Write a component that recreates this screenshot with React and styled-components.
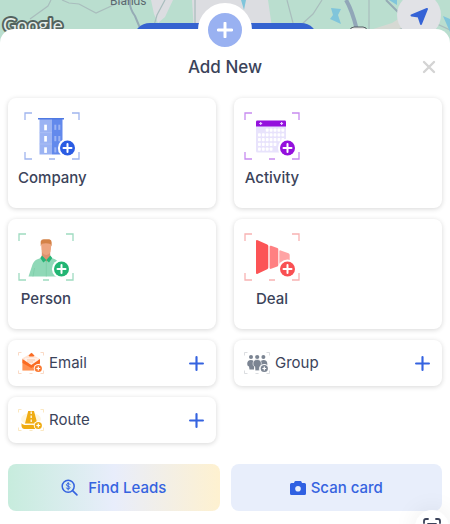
import styled, { createGlobalStyle } from "styled-components";

const GlobalStyle = createGlobalStyle`
  * {
    box-sizing: border-box;
  }

  body {
    margin: 0;
    background: #fff;
    font-family: Inter, "Liberation Sans", sans-serif;
    color: #3b435a;
  }

  button {
    font-family: inherit;
    color: inherit;
    border: none;
    padding: 0;
    cursor: pointer;
  }

  svg {
    display: block;
    flex-shrink: 0;
  }
`;

const Page = styled.div`
  position: relative;
  min-height: 100vh;
  overflow: hidden;
`;

const MapArea = styled.div`
  height: 48px;
  background: #badecf;
`;

const MapCanvas = styled.svg`
  width: 100%;
  height: 48px;
`;

const LocateButton = styled.button`
  position: absolute;
  top: -7px;
  right: 9px;
  width: 44px;
  height: 44px;
  border-radius: 50%;
  background: #e1e2e6;
`;

const Sheet = styled.main`
  position: relative;
  margin-top: -19px;
  padding: 0 8px 12px;
  border-radius: 14px 14px 0 0;
  background: #fff;
`;

const AddBubble = styled.button`
  position: absolute;
  top: -26px;
  left: 50%;
  transform: translateX(-50%);
  width: 54px;
  height: 54px;
  border: 10px solid #fff;
  border-radius: 50%;
  background: #99b1f1;
  display: flex;
  align-items: center;
  justify-content: center;
`;

const SheetHeader = styled.header`
  display: grid;
  grid-template-columns: 1fr auto 1fr;
  align-items: center;
  padding: 26px 6px 19px;
`;

const Title = styled.h1`
  grid-column: 2;
  margin: 0;
  font-size: 17px;
  line-height: 24px;
  font-weight: 500;
`;

const CloseButton = styled.button`
  justify-self: end;
  background: none;
`;

const Grid = styled.div`
  display: grid;
  grid-template-columns: 1fr 1fr;
  gap: 11px 18px;
`;

const CardBase = styled.button`
  display: flex;
  border-radius: 8px;
  background: #fff;
  box-shadow: 0 1px 5px rgba(0, 0, 0, 0.16);
`;

const Card = styled(CardBase)`
  height: 110px;
  padding: 14px 10px;
  align-items: flex-start;
`;

const CardBody = styled.span`
  display: flex;
  flex-direction: column;
  align-items: center;
  gap: 7px;
`;

const CardLabel = styled.span`
  font-size: 15px;
  line-height: 22px;
  font-weight: 500;
`;

const RowCard = styled(CardBase)`
  height: 46px;
  padding: 0 12px 0 10px;
  align-items: center;
  gap: 5px;
`;

const RowLabel = styled.span`
  flex: 1;
  text-align: left;
  font-size: 15px;
  line-height: 22px;
`;

const Actions = styled.div`
  display: grid;
  grid-template-columns: 1fr 1fr;
  gap: 11px;
  margin-top: 21px;
`;

const ActionButton = styled.button`
  height: 47px;
  display: flex;
  align-items: center;
  justify-content: center;
  gap: ${(p) => p.$gap};
  border-radius: 8px;
  background: ${(p) => p.$background};
  color: #3563e0;
  font-size: 15px;
  font-weight: 500;
`;

const ScanBubble = styled.button`
  position: absolute;
  right: 1px;
  bottom: -20px;
  width: 34px;
  height: 34px;
  border-radius: 50%;
  background: #fff;
  box-shadow: 0 0 24px rgba(0, 0, 0, 0.08);
  display: flex;
  align-items: center;
  justify-content: center;
`;

const Plus = ({ size, color, width }) => (
  <svg width={size} height={size} viewBox="0 0 14 14" stroke={color} strokeWidth={width} strokeLinecap="round">
    <path d="M7 1v12M1 7h12" />
  </svg>
);

// corner brackets, the drawing itself and the round plus badge
const FramedIcon = ({ frame, accent, children }) => (
  <svg width="56" height="48" viewBox="0 0 56 48">
    <path d="M1 8V1h7M48 1h7v7M55 40v7h-7M8 47H1v-7M25 47h6" fill="none" stroke={frame} strokeWidth="1.3" />
    {children}
    <circle cx="43.5" cy="36" r="9.6" fill="#fff" />
    <circle cx="43.5" cy="36" r="7.5" fill={accent} />
    <path d="M43.5 32v8M39.5 36h8" stroke="#fff" strokeWidth="2" strokeLinecap="round" />
  </svg>
);

const SmallFramedIcon = ({ frame, accent, children }) => (
  <svg width="26" height="22" viewBox="0 0 26 22">
    <path
      d="M.5 3.5v-3h3M22.5.5h3v3M25.5 18.5v3h-3M3.5 21.5h-3v-3M11.5 21.5h3"
      fill="none"
      stroke={frame}
      strokeWidth="0.8"
    />
    {children}
    <circle cx="20.3" cy="16.5" r="4.5" fill="#fff" />
    <circle cx="20.3" cy="16.5" r="3.6" fill={accent} />
    <path d="M20.3 14.6v3.8M18.4 16.5h3.8" stroke="#fff" strokeWidth="1.2" />
  </svg>
);

const CompanyIcon = () => (
  <FramedIcon frame="#a0b5ee" accent="#2b5ce3">
    <path d="M15.5 7H28v35.5H15.5z" fill="#9bb3f3" />
    <path d="M28 7h10.5v35.5H28z" fill="#6289ec" />
    <path d="M14 6h26v1.5H14z" fill="#4f79e2" />
    <path d="M15.5 20.7H28M15.5 32H28" stroke="#b5c7f6" strokeWidth="0.6" />
    {[12.7, 24, 35.3].map((y) => (
      <g key={y}>
        <rect x="20.2" y={y} width="2.7" height="5.6" fill="#fff" />
        <rect x="30.3" y={y} width="2" height="5.2" fill="#9bb3f3" />
        <rect x="34.3" y={y} width="2" height="5.2" fill="#9bb3f3" />
      </g>
    ))}
  </FramedIcon>
);

const ActivityIcon = () => (
  <FramedIcon frame="#c78cf0" accent="#9411dd">
    <rect x="12" y="10" width="30" height="30.5" rx="1.5" fill="#e8e3fc" />
    <path d="M12 14.5V9.7q0-1.2 1.2-1.2h27.6q1.2 0 1.2 1.2v4.8z" fill="#9411dd" />
    <path d="M16.7 10v3M15.2 11.5h3M37.6 10v3M36.1 11.5h3" stroke="#e9cbff" strokeWidth="1.2" />
    {[0, 1, 2, 3, 4].map((row) =>
      [0, 1, 2, 3, 4, 5, 6]
        .filter((col) => (row > 0 || col > 1) && (row < 4 || col < 4) && (row < 3 || col < 5))
        .map((col) => (
          <rect
            key={`${row}-${col}`}
            x={14 + col * 3.9}
            y={16.5 + row * 4.75}
            width="2.8"
            height="3.2"
            rx="0.8"
            fill="#fff"
          />
        ))
    )}
  </FramedIcon>
);

const PersonIcon = () => (
  <FramedIcon frame="#9edbc0" accent="#22b573">
    <path d="M10.5 43.5l4-12q1.5-4 5-5.2l4.500-1.800h8.500l4.500 1.800q3 1 4 4.600l3 12.600z" fill="#8fd8b7" />
    <path d="M23.800 18h8.400v6l-3.600 5-4.800-5z" fill="#df9270" />
    <path d="M23.100 9.5h10.200l-.4 7.500q-.6 4.600-4.700 5-4.100-.4-4.700-5z" fill="#eda580" />
    <path d="M22.700 13.500v-5q.6-2.300 3-2.300h5.600q2.300.4 2.300 2.800v4.500l-1.100-2.500q-4.500-1.300-8.700-.2z" fill="#d48247" />
    <path d="M24 22.500l4.300 4.500 4-4.500 2 2.500-3.300 4.500-2.700-2.300-3 2.300-3-4.500z" fill="#28b578" />
    <path d="M28.300 28v15.500M16.500 35l-1.500 8.500" stroke="#75c9a2" strokeWidth="0.6" />
  </FramedIcon>
);

const DealIcon = () => (
  <FramedIcon frame="#f8b3b3" accent="#f95053">
    <path d="M12 8.300q0-1.800 1.700-1.100l9.500 4.200q1.100.5 1.100 1.700v21.500q0 1.200-1.100 1.700l-9.500 4.500q-1.700.7-1.700-1.100z" fill="#fc5456" />
    <path d="M25.600 14q0-1.700 1.500-1.200l6.200 2.300q1 .4 1 1.400v15.500q0 1-1 1.500l-6.200 2.300q-1.500.4-1.500-1z" fill="#ff8082" />
    <path d="M35.300 18.500q0-1.500 1.400-1.100l7.800 2.900q1.200.5 1.200 1.700v6l-6 2.500h-4.400z" fill="#ffa4a5" />
  </FramedIcon>
);

const EmailIcon = () => (
  <SmallFramedIcon frame="#f9d0b7" accent="#fa7931">
    <path d="M4 6.500l8-4.500V1.500h3V3l7 4v11.500H4z" fill="#ffe5d5" />
    <path d="M10.500 3.500l3-2.700 3 2.700-1 1h-4z" fill="#fa6b22" />
    <path d="M7 6h13v8H7z" fill="#fff0e8" />
    <path d="M9 8h8M9 10h6" stroke="#fbc5a5" />
    <path d="M4.500 8l8.800 6L22 8v10.500H4.500z" fill="#ff9152" />
    <path d="M4.500 7l8.800 6L22 7v4l-8.700 5-8.800-5z" fill="#fa6b22" />
  </SmallFramedIcon>
);

const RouteIcon = () => (
  <SmallFramedIcon frame="#fae2b3" accent="#efac13">
    <ellipse cx="13" cy="10" rx="10" ry="6" fill="#fff6df" />
    <path d="M10.200 2h5.800l3.300 12.500H7z" fill="#efac13" />
    <path d="M13.200 2.500v11" stroke="#fff" strokeWidth="1.200" strokeDasharray="2.500 1.500" />
    <path d="M3.500 14q1 2 5 2h9v4h-11Q4 20 3.500 17z" fill="#efac13" />
  </SmallFramedIcon>
);

const GroupIcon = () => (
  <SmallFramedIcon frame="#d2d4d8" accent="#7b8492">
    <g fill="#7b8492">
      <circle cx="7" cy="5" r="2" />
      <circle cx="13.200" cy="5" r="2.100" />
      <circle cx="19.400" cy="5" r="2" />
      <path d="M3.200 12q0-4 3.800-4 2.600 0 3 2v7.500H5.500l-.5-3q-1.800-.5-1.800-2.500z" />
      <path d="M16.500 10q.5-2 3-2 3.800 0 3.800 4v4h-6.800z" />
    </g>
    <path
      d="M9 12q0-4.500 4.200-4.500T17.400 12q0 2-1.700 2.700l-.5 4h-4l-.5-4Q9 14 9 12z"
      fill="#7b8492"
      stroke="#fff"
      strokeWidth="0.6"
    />
  </SmallFramedIcon>
);

const CARDS = [
  { label: "Company", Icon: CompanyIcon },
  { label: "Activity", Icon: ActivityIcon },
  { label: "Person", Icon: PersonIcon },
  { label: "Deal", Icon: DealIcon },
];

const ROWS = [
  { label: "Email", Icon: EmailIcon },
  { label: "Group", Icon: GroupIcon },
  { label: "Route", Icon: RouteIcon },
];

const MapBackground = () => (
  <MapCanvas viewBox="0 0 450 48" preserveAspectRatio="xMidYMin slice">
    <path d="M151 0h22l-8 17-7 6-4-9zM192 0h76l7 48h-80z" fill="#dcdde1" />
    <path d="M370 30l22-7 14-9 15 2v32h-55z" fill="#d6d9d3" />
    <g fill="none" stroke="#a9bdbd" strokeWidth="1.2">
      <path d="M51 0l-3 6-18 13M62 0l7 3 10 1 17 9 24-11 9-2M165 0l-8 15-4 14" />
      <path d="M287 0l6 23M322 0l-9 14-11 10 8 8M369 0v30M195 0v30" />
      <path d="M398 30l28-11 24 11" />
    </g>
    <path d="M130 0q-1 8 5 16l5 12M386 0l18 18" fill="none" stroke="#96abb5" strokeWidth="2" />
    <path d="M346 0q6 10 11 30" fill="none" stroke="#91a6b8" strokeWidth="4" />
    <path d="M331 8l10 1-3 6 3 9-11-5 3-4zM241 0h5l-2 10zM389 0l8 5v-5zM443 16l7 3v13z" fill="#80c5db" />
    <rect x="133" y="23" width="185" height="34" rx="17" fill="#3563d0" />
    <rect x="350" y="27" width="17" height="12" rx="4" fill="#e7e7e7" stroke="#555f63" />
    <text x="110" y="5" fontSize="12" fontFamily="Roboto, sans-serif" fill="#5b6870">
      Blands
    </text>
    <text
      x="3"
      y="32"
      fontSize="19"
      fontFamily="Lato, sans-serif"
      fill="#e6edea"
      stroke="#53635e"
      strokeWidth="4"
      strokeLinejoin="round"
      paintOrder="stroke"
    >
      Google
    </text>
  </MapCanvas>
);

const App = () => {
  return (
    <Page>
      <GlobalStyle />
      <MapArea>
        <MapBackground />
      </MapArea>
      <LocateButton aria-label="My location">
        <svg width="44" height="44" viewBox="0 0 44 44">
          <path
            d="M30 16l-6 15-2.500-7.500-7-1z"
            fill="#3563d6"
            stroke="#3563d6"
            strokeWidth="2"
            strokeLinejoin="round"
          />
        </svg>
      </LocateButton>

      <Sheet>
        <AddBubble aria-label="Add">
          <Plus size={16} color="#fff" width={2.6} />
        </AddBubble>
        <SheetHeader>
          <Title>Add New</Title>
          <CloseButton aria-label="Close">
            <svg width="14" height="14" viewBox="0 0 14 14" stroke="#d4d4d4" strokeWidth="2.4" strokeLinecap="round">
              <path d="M2 2l10 10M12 2L2 12" />
            </svg>
          </CloseButton>
        </SheetHeader>

        <Grid>
          {CARDS.map(({ label, Icon }) => (
            <Card key={label}>
              <CardBody>
                <Icon />
                <CardLabel>{label}</CardLabel>
              </CardBody>
            </Card>
          ))}
          {ROWS.map(({ label, Icon }) => (
            <RowCard key={label}>
              <Icon />
              <RowLabel>{label}</RowLabel>
              <Plus size={15} color="#3563e0" width={2} />
            </RowCard>
          ))}
        </Grid>

        <Actions>
          <ActionButton $gap="10px" $background="linear-gradient(90deg, #c7ecdd 0%, #e8edfb 50%, #fef1d0 100%)">
            <svg width="17" height="17" viewBox="0 0 17 17" fill="none" stroke="#3563e0" strokeLinecap="round">
              <circle cx="7.2" cy="7.2" r="6" strokeWidth="1.5" />
              <path d="M11.6 11.6l4.300 4.300" strokeWidth="1.6" />
              <path
                d="M9 5.400Q8.600 4.500 7.200 4.500T5.400 5.700Q5.400 6.900 7.200 7.200T9 8.700Q9 9.900 7.200 9.900T5.400 9M7.200 3.500v7.400"
                strokeWidth="1"
              />
            </svg>
            Find Leads
          </ActionButton>
          <ActionButton $gap="5px" $background="#e8eefb">
            <svg width="16" height="14" viewBox="0 0 16 14">
              <path
                d="M5.500 0h5q.6 0 .9.600L12 2h2.500Q16 2 16 3.500v9q0 1.500-1.500 1.500h-13Q0 14 0 12.500v-9Q0 2 1.500 2H4L4.600.6Q4.900 0 5.500 0z"
                fill="#2f60e2"
              />
              <circle cx="8" cy="7.700" r="2.800" fill="#e8eefb" />
            </svg>
            Scan card
          </ActionButton>
        </Actions>
      </Sheet>

      <ScanBubble aria-label="Scan">
        <svg width="18" height="18" viewBox="0 0 18 18" fill="none" stroke="#3b435a" strokeWidth="1.8" strokeLinecap="round">
          <path d="M1 5V3q0-2 2-2h2M13 1h2q2 0 2 2v2M17 13v2q0 2-2 2h-2M5 17H3q-2 0-2-2v-2M5 6h8M5 10h8" />
        </svg>
      </ScanBubble>
    </Page>
  );
};

export default App;
